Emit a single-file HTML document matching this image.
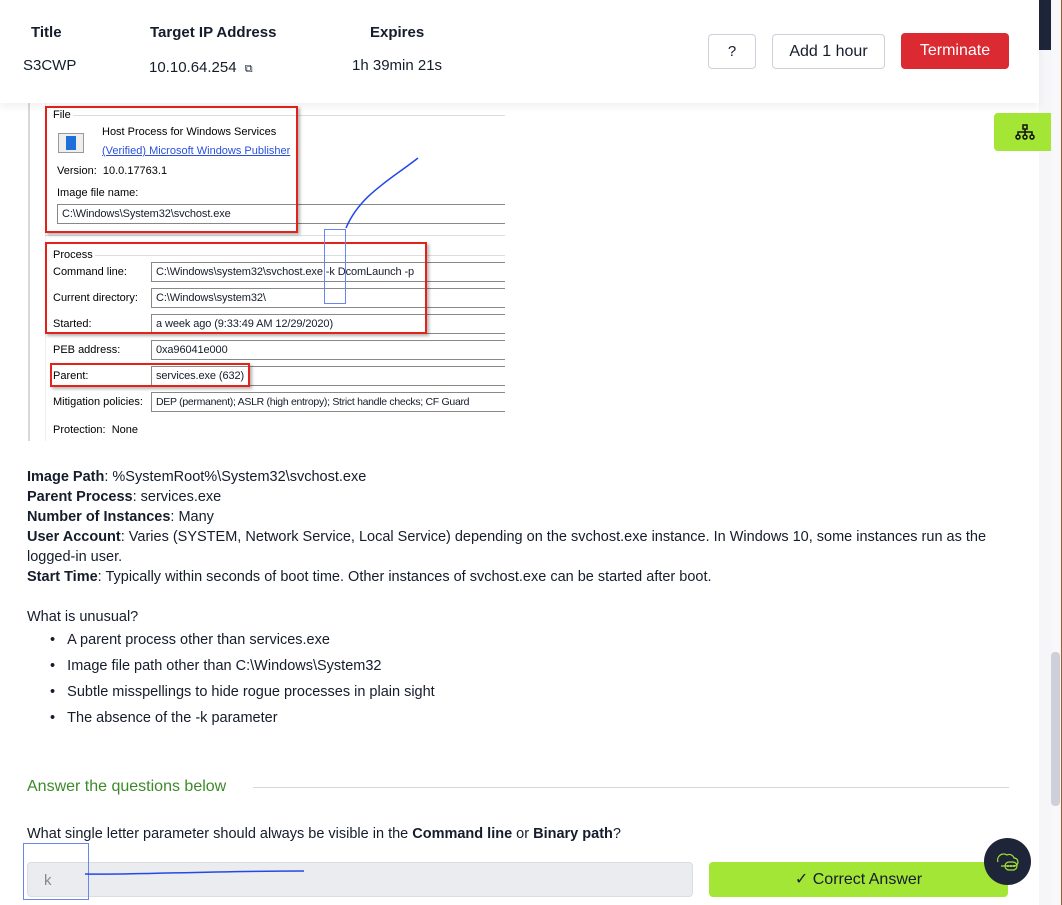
<!DOCTYPE html>
<html><head><meta charset="utf-8"><style>
*{margin:0;padding:0;box-sizing:border-box}
body{width:1062px;height:905px;overflow:hidden;background:#fff;font-family:"Liberation Sans",sans-serif;color:#151c2b;position:relative}
.a{position:absolute;white-space:nowrap}
.hd{font-weight:bold;font-size:15px}
.ss{font-family:"Liberation Sans",sans-serif;font-size:11px;color:#000}
.fld{position:absolute;border:1px solid #888;border-right:none;height:20px;padding:3px 4px;font-size:11px;background:#fff;white-space:nowrap;overflow:hidden;letter-spacing:-0.1px}
.red{position:absolute;border:2px solid #e2231a;box-shadow:2px 2px 3px rgba(0,0,0,.3)}
.t{font-size:14.5px;line-height:20px}
</style></head><body>
<div class="a" style="left:1039px;top:0;width:13px;height:905px;background:#f6f6f9"></div>
<div class="a" style="left:1039px;top:0;width:12px;height:50px;background:#1f2539"></div>
<div class="a" style="left:1052px;top:0;width:9px;height:905px;background:#f8f8fa"></div>
<div class="a" style="left:1051px;top:652px;width:9px;height:154px;background:#cdd0d8;border-radius:4px"></div>
<div class="a" style="left:1061px;top:0;width:1px;height:905px;background:#a05a2c"></div>
<div class="a" style="left:0;top:0;width:1039px;height:103px;background:#fff;box-shadow:0 4px 8px rgba(0,0,0,.06);z-index:2"></div>
<div style="position:absolute;z-index:3;left:0;top:0">
<div class="a hd" style="left:31px;top:24px">Title</div>
<div class="a hd" style="left:150px;top:24px">Target IP Address</div>
<div class="a hd" style="left:370px;top:24px">Expires</div>
<div class="a" style="left:23px;top:57px;font-size:15px">S3CWP</div>
<div class="a" style="left:149px;top:59px;font-size:15px">10.10.64.254 <span style="font-size:11px;margin-left:4px">⧉</span></div>
<div class="a" style="left:352px;top:57px;font-size:15px">1h 39min 21s</div>
<div class="a" style="left:708px;top:34px;width:48px;height:35px;border:1px solid #ccd0d8;border-radius:4px;text-align:center;line-height:33px;font-size:15px">?</div>
<div class="a" style="left:772px;top:34px;width:113px;height:35px;border:1px solid #ccd0d8;border-radius:4px;text-align:center;line-height:33px;font-size:16px">Add 1 hour</div>
<div class="a" style="left:901px;top:33px;width:108px;height:36px;background:#dc2a33;border-radius:4px;text-align:center;line-height:36px;font-size:16px;color:#fff">Terminate</div>
</div>
<div class="a" style="left:994px;top:113px;width:57px;height:38px;background:#a3e635;border-radius:4px 0 0 4px"></div>
<svg class="a" style="left:1015px;top:124px" width="20" height="16" viewBox="0 0 20 16" fill="none" stroke="#111" stroke-width="1.5"><rect x="8" y="1" width="4" height="4"/><path d="M10 5v3M3 11V8h14v3M10 8v3"/><circle cx="3" cy="13" r="2"/><circle cx="10" cy="13" r="2"/><circle cx="17" cy="13" r="2"/></svg>
<!-- screenshot -->
<div class="a" style="left:28px;top:103px;width:2px;height:338px;background:#d8d8d8"></div>
<div class="a" style="left:45px;top:103px;width:1px;height:338px;background:#eee"></div>
<div class="a" style="left:52px;top:115px;width:453px;height:1px;background:#ddd"></div>
<div class="a ss" style="left:53px;top:109px;background:#fff;padding-right:2px">File</div>
<div class="a" style="left:58px;top:133px;width:26px;height:20px;border:1px solid #999;background:#eee"><div style="position:absolute;left:7px;top:2px;width:10px;height:14px;background:#1e6fd9"></div></div>
<div class="a ss" style="left:102px;top:126px">Host Process for Windows Services</div>
<div class="a ss" style="left:102px;top:145px;color:#2a4fdc;text-decoration:underline">(Verified) Microsoft Windows Publisher</div>
<div class="a ss" style="left:57px;top:165px">Version:&nbsp; 10.0.17763.1</div>
<div class="a ss" style="left:57px;top:187px">Image file name:</div>
<div class="fld" style="left:57px;top:204px;width:448px">C:\Windows\System32\svchost.exe</div>
<div class="a" style="left:45px;top:235px;width:460px;height:1px;background:#ddd"></div>
<div class="a" style="left:52px;top:255px;width:453px;height:1px;background:#ddd"></div>
<div class="a ss" style="left:53px;top:249px;background:#fff;padding-right:2px">Process</div>
<div class="a ss" style="left:53px;top:266px">Command line:</div>
<div class="fld" style="left:151px;top:262px;width:354px">C:\Windows\system32\svchost.exe -k DcomLaunch -p</div>
<div class="a ss" style="left:53px;top:292px">Current directory:</div>
<div class="fld" style="left:151px;top:288px;width:354px">C:\Windows\system32\</div>
<div class="a ss" style="left:53px;top:318px">Started:</div>
<div class="fld" style="left:151px;top:314px;width:354px">a week ago (9:33:49 AM 12/29/2020)</div>
<div class="a ss" style="left:53px;top:344px">PEB address:</div>
<div class="fld" style="left:151px;top:340px;width:354px">0xa96041e000</div>
<div class="a ss" style="left:53px;top:370px">Parent:</div>
<div class="fld" style="left:151px;top:366px;width:354px">services.exe (632)</div>
<div class="a ss" style="left:53px;top:396px">Mitigation policies:</div>
<div class="fld" style="left:151px;top:392px;width:354px;font-size:10.5px;letter-spacing:-0.3px">DEP (permanent); ASLR (high entropy); Strict handle checks; CF Guard</div>
<div class="a ss" style="left:53px;top:424px">Protection:&nbsp; None</div>
<div class="red" style="left:45px;top:106px;width:253px;height:127px"></div>
<div class="red" style="left:45px;top:242px;width:382px;height:92px"></div>
<div class="red" style="left:50px;top:363px;width:200px;height:24px"></div>
<div class="a" style="left:324px;top:229px;width:22px;height:75px;border:1.5px solid #6a84f0"></div>
<svg class="a" style="left:340px;top:150px" width="90" height="85"><path d="M6 78 C20 45 50 30 78 8" stroke="#2448e8" stroke-width="1.5" fill="none"/></svg>
<!-- text -->
<div class="a t" style="left:27px;top:467px"><b>Image Path</b>: %SystemRoot%\System32\svchost.exe</div>
<div class="a t" style="left:27px;top:487px"><b>Parent Process</b>: services.exe</div>
<div class="a t" style="left:27px;top:507px"><b>Number of Instances</b>: Many</div>
<div class="a t" style="left:27px;top:527px"><b>User Account</b>: Varies (SYSTEM, Network Service, Local Service) depending on the svchost.exe instance. In Windows 10, some instances run as the</div>
<div class="a t" style="left:27px;top:547px">logged-in user.</div>
<div class="a t" style="left:27px;top:567px"><b>Start Time</b>: Typically within seconds of boot time. Other instances of svchost.exe can be started after boot.</div>
<div class="a t" style="left:27px;top:607px">What is unusual?</div>
<div class="a t" style="left:50px;top:630px">•&nbsp;&nbsp;&nbsp;A parent process other than services.exe</div>
<div class="a t" style="left:50px;top:656px">•&nbsp;&nbsp;&nbsp;Image file path other than C:\Windows\System32</div>
<div class="a t" style="left:50px;top:682px">•&nbsp;&nbsp;&nbsp;Subtle misspellings to hide rogue processes in plain sight</div>
<div class="a t" style="left:50px;top:708px">•&nbsp;&nbsp;&nbsp;The absence of the -k parameter</div>
<div class="a" style="left:27px;top:778px;font-size:16px;color:#3d8a2a">Answer the questions below</div>
<div class="a" style="left:253px;top:787px;width:756px;height:1px;background:#d4d6dc"></div>
<div class="a t" style="left:27px;top:824px">What single letter parameter should always be visible in the <b>Command line</b> or <b>Binary path</b>?</div>
<div class="a" style="left:27px;top:862px;width:666px;height:35px;background:#ebecef;border:1px solid #dcdde2;border-radius:4px;padding:9px 16px;font-size:15px;color:#888">k</div>
<div class="a" style="left:709px;top:862px;width:299px;height:35px;background:#a3e635;border-radius:4px;text-align:center;line-height:35px;font-size:16px;color:#151c2b">✓ Correct Answer</div>
<div class="a" style="left:23px;top:843px;width:66px;height:57px;border:1.5px solid #6a84f0"></div>
<svg class="a" style="left:80px;top:865px" width="230" height="15"><path d="M5 9 C60 10 120 6 224 6" stroke="#2448e8" stroke-width="1.5" fill="none"/></svg>
<div class="a" style="left:984px;top:838px;width:47px;height:47px;border-radius:50%;background:#1f2539"></div>
<svg class="a" style="left:995px;top:850px" width="26" height="24" fill="none" stroke="#a3e635" stroke-width="1.2"><path d="M3 12a6 6 0 0 1 9-7a5 5 0 0 1 7 3a4 4 0 0 1 0 8H6"/><rect x="10" y="12" width="12" height="8" rx="4"/><circle cx="13" cy="16" r=".5"/><circle cx="16" cy="16" r=".5"/><circle cx="19" cy="16" r=".5"/></svg>
</body></html>
